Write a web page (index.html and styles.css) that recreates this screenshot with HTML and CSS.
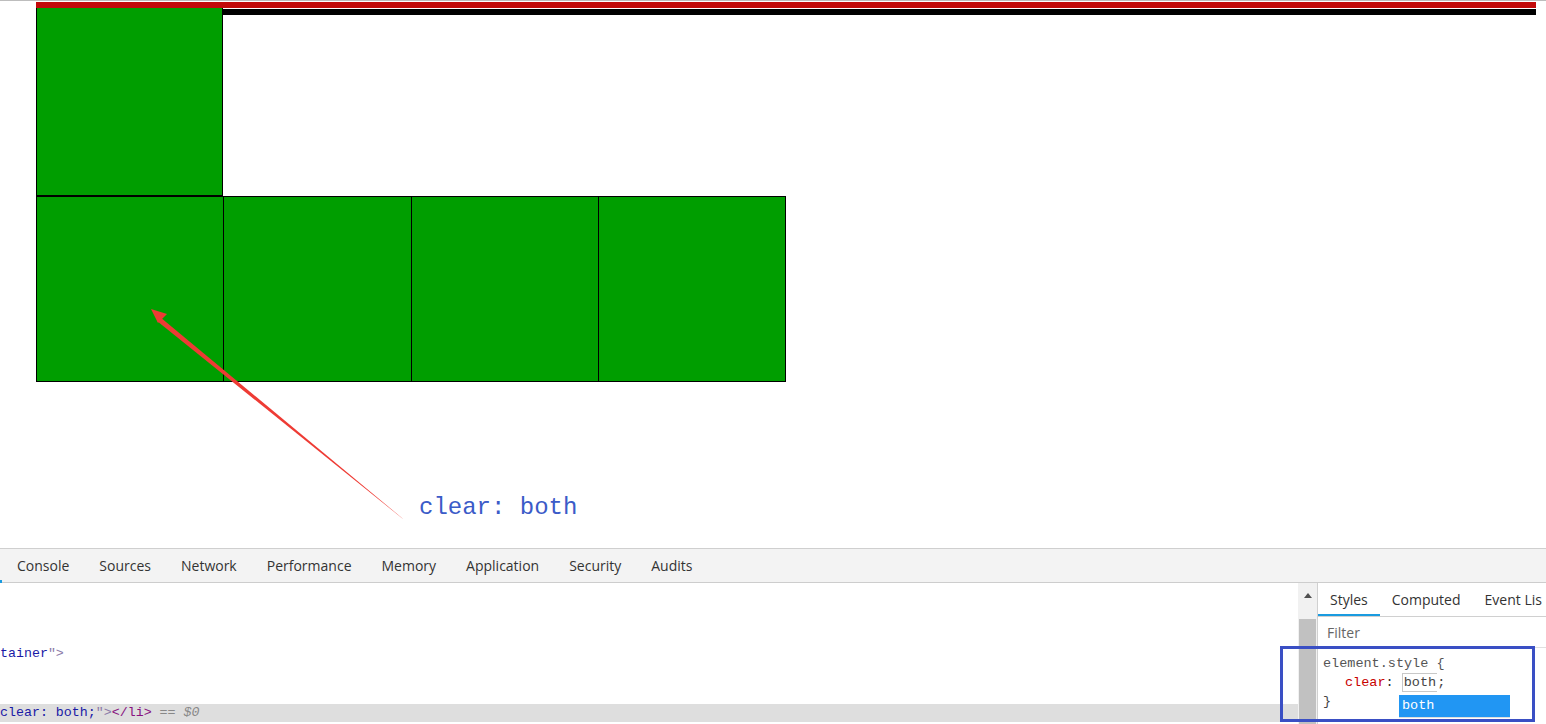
FILE: index.html
```html
<!DOCTYPE html>
<html>
<head>
<meta charset="utf-8">
<link rel="stylesheet" href="styles.css">
</head>
<body>
<div class="page">
  <div class="topline"></div>
  <div class="demo">
    <div class="redbar"></div>
    <div class="row first">
      <div class="box"></div>
      <div class="blackbar"></div>
    </div>
    <div class="row">
      <div class="box"></div>
      <div class="box"></div>
      <div class="box"></div>
      <div class="box"></div>
    </div>
  </div>
  <svg class="arrow" width="420" height="240" viewBox="0 0 420 240">
    <polygon points="402,228 160,27 157,31 403,229" fill="#ee3b34"/>
    <polygon points="151,19 167,24 158,33" fill="#ee3b34"/>
  </svg>
  <div class="note">clear: both</div>
</div>
<div class="devtools">
  <div class="tabbar">
    <span class="active-mark"></span>
    <span class="tab">Console</span>
    <span class="tab">Sources</span>
    <span class="tab">Network</span>
    <span class="tab">Performance</span>
    <span class="tab">Memory</span>
    <span class="tab">Application</span>
    <span class="tab">Security</span>
    <span class="tab">Audits</span>
  </div>
  <div class="panels">
    <div class="elements">
      <div class="line gap1"><span class="attr">tainer</span><span class="punc">"&gt;</span></div>
      <div class="line selected"><span class="attr">clear: both;</span><span class="punc">"&gt;</span><span class="tag">&lt;/li&gt;</span><span class="eq"> == $0</span></div>
    </div>
    <div class="scroll">
      <div class="up"></div>
      <div class="thumb"></div>
    </div>
    <div class="styles">
      <div class="stabs">
        <span class="stab on">Styles</span>
        <span class="stab">Computed</span>
        <span class="stab">Event Lis</span>
      </div>
      <div class="filter">Filter</div>
      <div class="rule">
        <div class="code sel">element.style {</div>
        <div class="code prop"><span class="pname">clear</span><span class="colon">:</span> <span class="val">both</span>;</div>
        <div class="code">}</div>
        <div class="suggest">both</div>
      </div>
      <div class="frame"></div>
    </div>
  </div>
</div>
</body>
</html>
```

FILE: styles.css
```css
html, body { margin: 0; padding: 0; background: #fff; }
body { width: 1546px; height: 724px; overflow: hidden; font-family: "Open Sans", "Noto Sans", sans-serif; }

.page { position: relative; height: 548px; }
.topline { height: 1px; background: #bdbdbd; }
.demo { padding: 1px 0 0 36px; width: 1500px; }
.redbar { height: 6px; background: #c20a0a; }
.row { display: flex; }
.row.first { align-items: flex-start; }
.box { background: #009e00; border: 1px solid #000; margin-right: -1px; }
.row.first .box { width: 185px; height: 187px; border-top: none; }
.row:not(.first) .box { width: 186px; height: 184px; }
.row:not(.first) .box:nth-child(2) { width: 187px; }
.blackbar { flex: 1; height: 6px; background: #000; margin-top: 1px; }
.arrow { position: absolute; left: 0; top: 290px; }
.note { position: absolute; left: 419px; top: 494px; font-family: "Liberation Mono", "DejaVu Sans Mono", monospace; font-size: 24px; color: #3b5bc8; }

.devtools { height: 176px; display: flex; flex-direction: column; }
.tabbar { height: 33px; background: #f3f3f3; border-top: 1px solid #cfcfcf; border-bottom: 1px solid #cdcdcd; display: flex; align-items: center; padding-left: 17px; position: relative; }
.active-mark { position: absolute; left: 0; bottom: -1px; width: 2px; height: 3px; background: #1a9be0; }
.tab { font-size: 14px; color: #333; margin-right: 30px; }
.panels { flex: 1; display: flex; min-height: 0; }
.elements { width: 1298px; flex-shrink: 0; font-family: "Liberation Mono", "DejaVu Sans Mono", monospace; font-size: 13.3px; padding-top: 62px; }
.line { height: 18px; line-height: 18px; white-space: pre; }
.gap1 { margin-bottom: 41px; }
.selected { background: #dedede; }
.attr { color: #1a1aa6; }
.punc { color: #8c7aa8; }
.tag { color: #881280; }
.eq { color: #888; font-style: italic; }
.scroll { width: 19px; flex-shrink: 0; background: #f1f1f1; border-right: 1px solid #d0d0d0; display: flex; flex-direction: column; align-items: center; }
.up { width: 0; height: 0; border-left: 4px solid transparent; border-right: 4px solid transparent; border-bottom: 5px solid #505050; margin-top: 10px; }
.thumb { width: 17px; flex: 1; background: #c1c1c1; margin-top: 21px; }
.styles { flex: 1; min-width: 0; position: relative; }
.stabs { height: 33px; border-bottom: 1px solid #d0d0d0; display: flex; align-items: flex-end; overflow: hidden; }
.stab { font-size: 14px; color: #333; padding: 0 12px 7px 12px; white-space: nowrap; }
.stab.on { border-bottom: 2px solid #1a9be0; padding-bottom: 5px; }
.filter { height: 30px; line-height: 32px; padding-left: 9px; font-size: 14px; color: #666; border-bottom: 1px solid #e0e0e0; }
.rule { position: relative; padding: 6px 0 0 5px; font-family: "Liberation Mono", "DejaVu Sans Mono", monospace; font-size: 13.5px; }
.code { height: 19px; line-height: 19px; color: #444; white-space: pre; }
.sel { color: #555; }
.prop { padding-left: 22px; }
.pname { color: #c80000; }
.colon { color: #333; }
.val { display: inline-block; border: 1px solid #c8c8c8; border-right: none; padding: 0 1px; line-height: 17px; color: #444; }
.suggest { position: absolute; left: 81px; top: 47px; width: 108px; height: 22px; line-height: 22px; padding-left: 3px; background: #2196f3; color: #fff; border-bottom: 1px solid #ddd; }
.frame { position: absolute; left: -38px; top: 63px; width: 249px; height: 70px; border: 3px solid #3a4fc4; }
```
